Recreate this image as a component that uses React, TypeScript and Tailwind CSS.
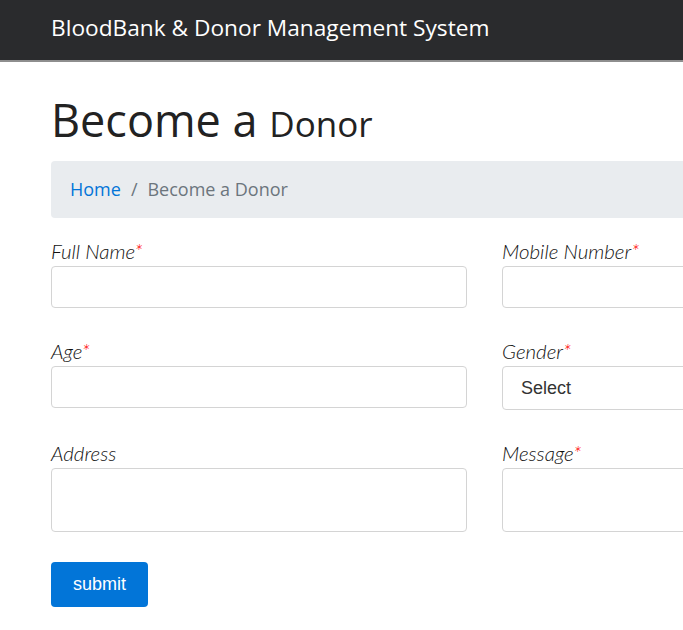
import React from "react";

function Field({ label, required, children }: { label: string; required?: boolean; children: React.ReactNode }) {
  return (
    <div className="flex flex-col">
      <label className="text-[20.5px] leading-[22px] mb-[4px] italic font-light text-[#111]" style={{ fontFamily: "Lato, sans-serif" }}>
        {label}
        {required && <span className="text-[#ff0000]">*</span>}
      </label>
      {children}
    </div>
  );
}

export default function App() {
  const inputCls = "w-[416px] h-[42px] border border-[#d4d4d4] rounded-[4px] bg-white";
  return (
    <div className="w-[683px] h-[630px] overflow-hidden bg-white" style={{ fontFamily: "'Open Sans', sans-serif" }}>
      <div className="w-[1100px]">
        <nav className="h-[62px] bg-[#2a2b2d] border-b-2 border-[#8e8e8e] flex items-center pl-[51px]">
          <span className="text-white text-[22.7px] leading-none -mt-[4px]">BloodBank &amp; Donor Management System</span>
        </nav>
        <div className="pl-[51px]">
          <h1 className="mt-[29px] text-[45px] leading-[58px] text-[#222] font-normal">
            Become a <span className="text-[35px]">Donor</span>
          </h1>
          <div className="mt-[8px] h-[57px] w-[1000px] bg-[#e9ecef] rounded-[4px] flex items-center pl-[19px] text-[18px]">
            <span className="text-[#0275d8]">Home</span>
            <span className="text-[#6c757d] px-[10px]">/</span>
            <span className="text-[#6c757d]">Become a Donor</span>
          </div>
          <div className="mt-[22px] grid grid-cols-[416px_416px] gap-x-[35px] gap-y-[32px]">
            <Field label="Full Name" required>
              <div className={inputCls} />
            </Field>
            <Field label="Mobile Number" required>
              <div className={inputCls} />
            </Field>
            <Field label="Age" required>
              <div className={inputCls} />
            </Field>
            <Field label="Gender" required>
              <div
                className="w-[416px] h-[44px] border border-[#d4d4d4] rounded-[4px] bg-white flex items-center pl-[18px] text-[18px] text-[#333]"
                style={{ fontFamily: "'Liberation Sans', Arial, sans-serif" }}
              >
                Select
              </div>
            </Field>
            <Field label="Address">
              <div className="w-[416px] h-[64px] border border-[#d4d4d4] rounded-[4px] bg-white" />
            </Field>
            <Field label="Message" required>
              <div className="w-[416px] h-[64px] border border-[#d4d4d4] rounded-[4px] bg-white" />
            </Field>
          </div>
          <button
            className="mt-[30px] w-[97px] h-[45px] bg-[#0275d8] rounded-[4px] text-white text-[18px]"
            style={{ fontFamily: "'Liberation Sans', Arial, sans-serif" }}
          >
            submit
          </button>
        </div>
      </div>
    </div>
  );
}
